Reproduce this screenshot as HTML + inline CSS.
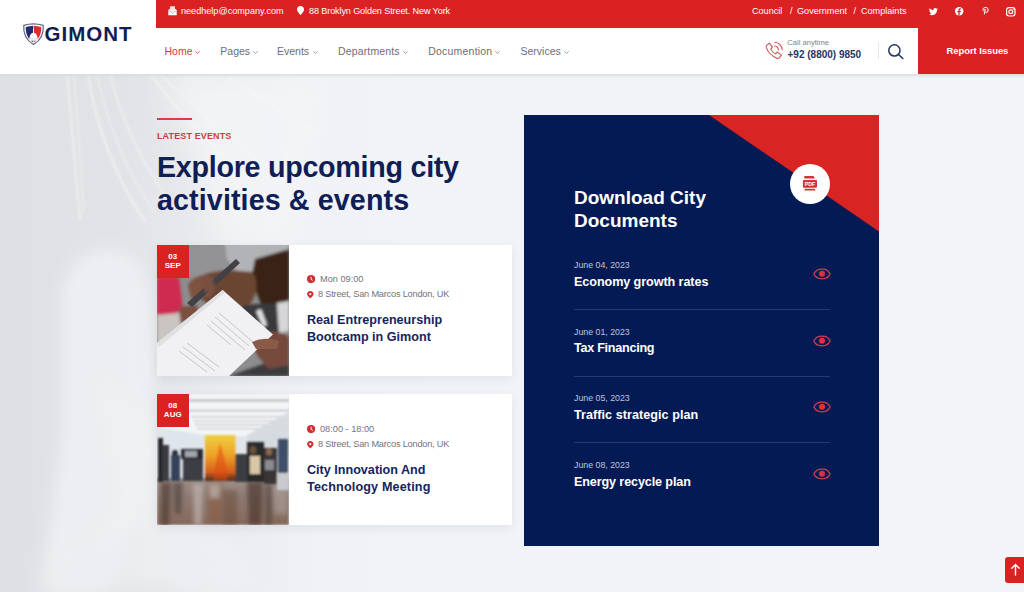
<!DOCTYPE html>
<html><head><meta charset="utf-8">
<style>
*{margin:0;padding:0;box-sizing:border-box}
html,body{width:1024px;height:592px;overflow:hidden}
body{font-family:"Liberation Sans",sans-serif;background:#f1f3f7;position:relative}
.a{position:absolute;white-space:nowrap;line-height:1}
svg{position:absolute;overflow:visible}
#header{position:absolute;left:0;top:0;width:1024px;height:74px;background:#fff}
#topbar{position:absolute;left:155.5px;top:0;width:868.5px;height:27.6px;background:#da2222}
.tb{color:#fff;font-size:9.1px;top:6.7px}
.nav{top:45.5px;font-size:10.5px;color:#6d6e72}
.nav.act{color:#d6393f}
.caret{position:absolute;width:3.2px;height:3.2px;border-right:1px solid currentColor;border-bottom:1px solid currentColor;transform:rotate(45deg)}
#report{position:absolute;left:918px;top:27px;width:106px;height:47px;background:#da2222}
.card{position:absolute;left:157px;width:355px;height:131px;background:#fff;box-shadow:0 3px 10px rgba(20,30,60,.07)}
.card .img{position:absolute;left:0;top:0;width:132px;height:131px;overflow:hidden}
.badge{position:absolute;left:0;top:0;width:31.5px;height:33px;background:#da2222}
.bt{color:#fff;font-size:8px;font-weight:bold;text-align:center;width:31.5px;left:0}
.meta{left:161px;font-size:9.2px;color:#70737b}
.ct{left:150px;font-size:12.6px;font-weight:bold;color:#15245c}
#panel{position:absolute;left:524px;top:115px;width:355px;height:431px;background:#041a54;overflow:hidden}
.pt{left:50px;font-size:19px;font-weight:bold;color:#fff}
.idate{left:50px;font-size:8.8px;color:#bfc5d6}
.ititle{left:50px;font-size:12.6px;font-weight:bold;color:#fff}
.sep{position:absolute;left:50px;width:256px;height:1px;background:#253a72}
</style></head>
<body>
<!-- background faint image -->
<svg style="left:0;top:74px" width="1024" height="518" viewBox="0 0 1024 518">
  <defs>
    <linearGradient id="bgl" x1="0" y1="0" x2="1" y2="0">
      <stop offset="0" stop-color="#dfe0e4"/>
      <stop offset="0.12" stop-color="#e1e3e6"/>
      <stop offset="0.2" stop-color="#e8eaed"/>
      <stop offset="0.3" stop-color="#eff1f5"/>
      <stop offset="0.4" stop-color="#f1f3f7"/>
      <stop offset="1" stop-color="#f2f4f8"/>
    </linearGradient>
    <linearGradient id="topsh" x1="0" y1="0" x2="0" y2="1">
      <stop offset="0" stop-color="#d8dade" stop-opacity="0.9"/>
      <stop offset="1" stop-color="#d8dade" stop-opacity="0"/>
    </linearGradient>
    <filter id="bl" x="-50%" y="-50%" width="200%" height="200%"><feGaussianBlur stdDeviation="8"/></filter>
    <filter id="bl2" x="-50%" y="-50%" width="200%" height="200%"><feGaussianBlur stdDeviation="1.1"/></filter>
    <filter id="bl3" x="-50%" y="-50%" width="200%" height="200%"><feGaussianBlur stdDeviation="14"/></filter>
  </defs>
  <rect width="1024" height="518" fill="url(#bgl)"/>
  <g filter="url(#bl3)" opacity="0.8">
    <path d="M170 0 L330 0 L300 180 L220 170 Z" fill="#f4f5f7"/>
  </g>
  <g filter="url(#bl2)" fill="none" stroke="#f8f9fa" opacity="0.6">
    <path d="M67 0 L80 145" stroke-width="1.8"/>
    <path d="M74 0 L84 140" stroke-width="1.2"/>
    <path d="M88 0 Q100 80 145 148" stroke-width="2"/>
    <path d="M97 0 Q112 75 155 140" stroke-width="1.2"/>
    <path d="M110 0 Q128 70 170 128" stroke-width="1.5"/>
    <path d="M150 0 Q180 40 240 100" stroke-width="2"/>
    <path d="M160 0 Q195 35 262 90" stroke-width="1.4"/>
    <path d="M225 0 Q260 25 320 60" stroke-width="1.6"/>
  </g>
  <g filter="url(#bl)" opacity="0.85">
    <path d="M62 230 C62 190 90 170 118 176 C140 182 150 205 152 240 L156 380 C150 440 130 480 100 518 L40 518 C50 450 62 390 62 340 Z" fill="#f0f1f4"/>
  </g>
  <g filter="url(#bl)" opacity="0.7">
    <path d="M95 300 L150 345 L205 470 L150 518 L100 470 L120 420 Z" fill="#f1f2f4"/>
    <path d="M60 470 L140 450 L130 518 L50 518 Z" fill="#eeeff2"/>
    <path d="M170 440 L240 470 L260 518 L170 518 Z" fill="#f0f1f4"/>
  </g>
  <rect width="1024" height="4" fill="url(#topsh)"/>
</svg>

<div id="header">
  <!-- logo -->
  <svg style="left:23px;top:23px" width="21" height="22" viewBox="0 0 21 22">
    <path d="M0.8 2.4 Q10.5 -0.6 20.2 2.4 C20.8 9 19.6 16.2 10.5 21.6 C1.4 16.2 0.2 9 0.8 2.4 Z" fill="#fff" stroke="#5d6284" stroke-width="1.2"/>
    <path d="M2.8 3.9 Q6.4 2.9 10.2 2.7 L10.2 19.3 C4.6 15.6 2.5 10.6 2.8 3.9 Z" fill="#222b6c"/>
    <path d="M18.2 3.9 Q14.6 2.9 10.8 2.7 L10.8 19.3 C16.4 15.6 18.5 10.6 18.2 3.9 Z" fill="#df2a2e"/>
    <path d="M6.4 15.6 Q6.6 10.4 10.5 9.6 Q14.4 10.4 14.6 15.6 Z" fill="#fff"/>
    <rect x="6.2" y="15.2" width="8.6" height="2.6" fill="#eceef2"/>
    <rect x="10.1" y="6" width="0.8" height="3.8" fill="#fff"/>
  </svg>
  <div class="a" style="left:44.5px;top:23.5px;font-size:20.5px;font-weight:bold;color:#0f1e55;letter-spacing:1px">GIMONT</div>

  <div id="topbar"></div>
  <!-- envelope -->
  <svg style="left:167.5px;top:5.7px" width="9" height="9.5" viewBox="0 0 9 9.5">
    <path d="M0.3 4 L4.5 1 L8.7 4 L8.7 9.2 L0.3 9.2 Z" fill="#fff"/>
    <rect x="2" y="0.3" width="5" height="5" fill="#fde4e4"/>
    <path d="M0.3 4.2 L4.5 7 L8.7 4.2" fill="none" stroke="#e9a0a0" stroke-width="0.8"/>
  </svg>
  <div class="a tb" style="left:181px">needhelp@company.com</div>
  <!-- pin -->
  <svg style="left:297px;top:6.3px" width="7" height="9" viewBox="0 0 7 9">
    <path d="M3.5 0 C5.6 0 7 1.5 7 3.4 C7 5.4 3.5 9 3.5 9 C3.5 9 0 5.4 0 3.4 C0 1.5 1.4 0 3.5 0 Z" fill="#fff"/>
  </svg>
  <div class="a tb" style="left:309px;letter-spacing:-0.12px">88 Broklyn Golden Street. New York</div>
  <div class="a tb" style="left:752px">Council</div>
  <div class="a tb" style="left:790px">/</div>
  <div class="a tb" style="left:797px">Government</div>
  <div class="a tb" style="left:853.5px">/</div>
  <div class="a tb" style="left:861px">Complaints</div>
  <!-- social -->
  <svg style="left:929px;top:7.5px" width="9" height="7.5" viewBox="0 0 24 20">
    <path d="M24 2.4c-.9.4-1.8.6-2.8.8 1-.6 1.8-1.6 2.2-2.7-1 .6-2 1-3.1 1.2C19.4.7 18.1 0 16.6 0c-2.7 0-4.9 2.2-4.9 4.9 0 .4 0 .8.1 1.1C7.7 5.8 4.1 3.9 1.7.9c-.4.7-.7 1.6-.7 2.5 0 1.7.9 3.2 2.2 4.1-.8 0-1.6-.2-2.2-.6v.1c0 2.4 1.7 4.4 3.9 4.8-.4.1-.8.2-1.3.2-.3 0-.6 0-.9-.1.6 2 2.4 3.4 4.6 3.4-1.7 1.3-3.8 2.1-6.1 2.1-.4 0-.8 0-1.2-.1 2.2 1.4 4.8 2.2 7.5 2.2 9.1 0 14-7.5 14-14v-.6c1-.7 1.8-1.6 2.5-2.5z" fill="#fff"/>
  </svg>
  <svg style="left:955.2px;top:6.8px" width="8.4" height="8.4" viewBox="0 0 24 24">
    <circle cx="12" cy="12" r="12" fill="#fff"/>
    <path d="M13.4 24 V14.8 H16.4 L16.9 11.2 H13.4 V9 C13.4 8 13.7 7.3 15.1 7.3 H17 V4.1 C16.6 4 15.5 3.9 14.3 3.9 C11.6 3.9 9.8 5.5 9.8 8.5 V11.2 H6.8 V14.8 H9.8 V24 Z" fill="#da2222"/>
  </svg>
  <svg style="left:981.7px;top:7.2px" width="7" height="7.8" viewBox="0 0 18 20">
    <path d="M9.6 0C4.1 0 1.3 3.9 1.3 7.2c0 2 .8 3.7 2.4 4.4.3.1.5 0 .6-.3l.2-.9c.1-.3 0-.4-.2-.7-.5-.6-.8-1.3-.8-2.3 0-3 2.2-5.6 5.8-5.6 3.2 0 4.9 1.9 4.9 4.5 0 3.4-1.5 6.3-3.7 6.3-1.2 0-2.2-1-1.9-2.3.4-1.5 1.1-3.1 1.1-4.2 0-1-.5-1.8-1.6-1.8-1.3 0-2.3 1.3-2.3 3.1 0 1.1.4 1.9.4 1.9L5.1 16c-.4 1.8-.1 4 0 4.2 0 .1.2.2.3.1.1-.1 1.6-1.9 2-3.7l.8-3c.4.7 1.5 1.4 2.7 1.4 3.6 0 6-3.3 6-7.6C16.9 3.1 14 0 9.6 0z" fill="#fff"/>
  </svg>
  <svg style="left:1006.3px;top:6.6px" width="9.6" height="9.6" viewBox="0 0 24 24">
    <rect x="1.5" y="1.5" width="21" height="21" rx="6" fill="none" stroke="#fff" stroke-width="3"/>
    <circle cx="12" cy="12" r="4.8" fill="none" stroke="#fff" stroke-width="3"/>
    <circle cx="18.3" cy="5.7" r="1.4" fill="#fff"/>
  </svg>

  <!-- nav -->
  <div class="a nav act" style="left:164.5px">Home</div><svg style="left:195.2px;top:50.5px" width="5" height="3" viewBox="0 0 5 3"><path d="M0.4 0.4 L2.5 2.4 L4.6 0.4" fill="none" stroke="#d6393f" stroke-width="0.85"/></svg>
  <div class="a nav" style="left:220.3px">Pages</div><svg style="left:252.7px;top:50.5px" width="5" height="3" viewBox="0 0 5 3"><path d="M0.4 0.4 L2.5 2.4 L4.6 0.4" fill="none" stroke="#8a8b8f" stroke-width="0.85"/></svg>
  <div class="a nav" style="left:277px">Events</div><svg style="left:312.7px;top:50.5px" width="5" height="3" viewBox="0 0 5 3"><path d="M0.4 0.4 L2.5 2.4 L4.6 0.4" fill="none" stroke="#8a8b8f" stroke-width="0.85"/></svg>
  <div class="a nav" style="left:338px;letter-spacing:0.15px">Departments</div><svg style="left:403.2px;top:50.5px" width="5" height="3" viewBox="0 0 5 3"><path d="M0.4 0.4 L2.5 2.4 L4.6 0.4" fill="none" stroke="#8a8b8f" stroke-width="0.85"/></svg>
  <div class="a nav" style="left:428.3px;letter-spacing:0.2px">Documention</div><svg style="left:495.2px;top:50.5px" width="5" height="3" viewBox="0 0 5 3"><path d="M0.4 0.4 L2.5 2.4 L4.6 0.4" fill="none" stroke="#8a8b8f" stroke-width="0.85"/></svg>
  <div class="a nav" style="left:520.5px">Services</div><svg style="left:564.2px;top:50.5px" width="5" height="3" viewBox="0 0 5 3"><path d="M0.4 0.4 L2.5 2.4 L4.6 0.4" fill="none" stroke="#8a8b8f" stroke-width="0.85"/></svg>

  <!-- phone -->
  <svg style="left:763.5px;top:40.5px" width="19.5" height="19.5" viewBox="0 0 24 24">
    <path d="M3.6 5.2 L6.6 2.6 L10.4 7.6 L8.3 10 C9.6 12.6 11.6 14.6 14.2 15.8 L16.4 13.6 L21.4 17.4 L18.9 20.4 C18.1 21.3 16.9 21.6 15.8 21.1 C9 18.4 5.4 14.8 2.8 8.2 C2.4 7.1 2.8 5.9 3.6 5.2 Z" fill="none" stroke="#d9474c" stroke-width="1.3" stroke-linejoin="round"/>
    <path d="M13 6.2 A5.4 5.4 0 0 1 17.8 11" fill="none" stroke="#d9474c" stroke-width="1.3" stroke-linecap="round"/>
    <path d="M13.2 1.6 A9.6 9.6 0 0 1 22.4 10.8" fill="none" stroke="#d9474c" stroke-width="1.3" stroke-linecap="round"/>
  </svg>
  <div class="a" style="left:787.3px;top:38.5px;font-size:7.6px;color:#7d7f84">Call anytime</div>
  <div class="a" style="left:787.5px;top:50.2px;font-size:10px;font-weight:bold;color:#243463">+92 (8800) 9850</div>
  <div style="position:absolute;left:878px;top:41.7px;width:1px;height:17px;background:#e6e7ea"></div>
  <svg style="left:887.5px;top:44px" width="15.5" height="15" viewBox="0 0 15.5 15">
    <circle cx="6.4" cy="6.4" r="5.6" fill="none" stroke="#243463" stroke-width="1.5"/>
    <path d="M10.5 10.5 L14.8 14.5" stroke="#243463" stroke-width="1.6" stroke-linecap="round"/>
  </svg>

  <div id="report"></div>
  <div class="a" style="left:946.5px;top:46.2px;font-size:9.5px;font-weight:bold;color:#fff;letter-spacing:-0.08px">Report Issues</div>
</div>

<!-- section heading -->
<div style="position:absolute;left:157px;top:118px;width:35px;height:2px;background:#d84040"></div>
<div class="a" style="left:157px;top:131.6px;font-size:9px;font-weight:bold;color:#d03c42;letter-spacing:0.12px">LATEST EVENTS</div>
<div class="a" style="left:157px;top:152.9px;font-size:28.7px;font-weight:bold;color:#0f1e55;letter-spacing:-0.28px">Explore upcoming city</div>
<div class="a" style="left:157px;top:186.3px;font-size:28.7px;font-weight:bold;color:#0f1e55;letter-spacing:0.1px">activities &amp; events</div>

<!-- card 1 -->
<div class="card" style="top:245px">
  <div class="img">
    <svg style="left:0;top:0" width="132" height="131" viewBox="0 0 132 131">
      <defs><filter id="f1" x="-20%" y="-20%" width="140%" height="140%"><feGaussianBlur stdDeviation="1.6"/></filter>
      <filter id="f1b"><feGaussianBlur stdDeviation="0.5"/></filter></defs>
      <rect width="132" height="131" fill="#8d8d8f"/>
      <g filter="url(#f1)">
        <rect x="20" y="0" width="60" height="30" fill="#939395"/>
        <path d="M68 -2 L132 -2 L132 8 L112 26 L80 26 L70 14 Z" fill="#b2b3b6"/>
        <path d="M0 32 L22 32 L26 64 L14 72 L0 72 Z" fill="#cf2c50"/>
        <path d="M0 70 L22 68 L26 98 L0 100 Z" fill="#c9c5c0"/>
        <path d="M98 14 L132 4 L132 62 L106 64 L94 34 Z" fill="#3b2419"/>
        <path d="M84 60 L120 58 L122 88 L88 88 Z" fill="#38393d"/>
        <path d="M120 58 L132 56 L132 86 L122 88 Z" fill="#d6d6d8"/>
        <path d="M99 66 L104 64 L110 80 L106 82 Z" fill="#e4e4e6"/>
        <path d="M36 36 C46 26 72 22 96 28 C102 36 100 52 92 60 L62 64 C50 60 42 52 36 46 Z" fill="#6a4433"/>
        <path d="M31 40 C36 30 50 28 57 34 L54 52 L34 54 Z" fill="#7d5240"/>
        <path d="M22 62 L40 60 L42 76 L24 78 Z" fill="#7a5040"/>
        <path d="M72 131 L132 110 L132 131 Z" fill="#3a3a3c"/>
        <path d="M94 90 C110 84 126 86 132 92 L132 120 L112 124 C104 116 98 108 95 100 Z" fill="#74493a"/>
      </g>
      <path d="M30 58 L79 14 L83 18 L35 62 Z" fill="#404045" filter="url(#f1b)"/>
      <path d="M44 34 C52 30 60 36 57 46 L48 48 Z" fill="#7a5040" filter="url(#f1)"/>
      <path d="M0 98 L65.7 45 L116 89.5 L72 131 L0 131 Z" fill="#f1f1f3" filter="url(#f1b)"/>
      <path d="M0 98 L65.7 45 L68 47.5 L2 102 Z" fill="#e0e0e3" filter="url(#f1b)"/>
      <g stroke="#9d9da3" stroke-width="0.7" opacity="0.75">
        <path d="M62 68 L96 97"/><path d="M58 72 L92 101"/><path d="M54 76 L88 105"/><path d="M50 80 L74 100"/>
        <path d="M30 98 L62 122"/><path d="M26 102 L58 126"/><path d="M22 106 L50 127"/>
      </g>
      <path d="M95 97 C104 93 114 93 122 96 L120 104 L99 104 Z" fill="#8a5a48" filter="url(#f1b)"/>
    </svg>
  </div>
  <div class="badge"></div>
  <div class="a bt" style="top:7.7px">03</div>
  <div class="a bt" style="top:16.9px">SEP</div>
  <svg style="left:150.2px;top:30.2px" width="8.2" height="8.2" viewBox="0 0 10 10">
    <circle cx="5" cy="5" r="5" fill="#cf3036"/>
    <path d="M5 2.2 V5.2 L7 6.6" fill="none" stroke="#fff" stroke-width="1.2"/>
  </svg>
  <div class="a meta" style="left:163px;top:29.8px">Mon 09:00</div>
  <svg style="left:150.2px;top:45.8px" width="6.6" height="7.4" viewBox="0 0 7 8">
    <path d="M3.5 0 C5.5 0 7 1.5 7 3.3 C7 5.2 3.5 8 3.5 8 C3.5 8 0 5.2 0 3.3 C0 1.5 1.5 0 3.5 0 Z" fill="#cf3036"/>
    <circle cx="3.5" cy="3.3" r="1.2" fill="#fff"/>
  </svg>
  <div class="a meta" style="left:161px;top:44.8px;letter-spacing:-0.2px">8 Street, San Marcos London, UK</div>
  <div class="a ct" style="top:68.8px">Real Entrepreneurship</div>
  <div class="a ct" style="top:86px">Bootcamp in Gimont</div>
</div>

<!-- card 2 -->
<div class="card" style="top:394.3px">
  <div class="img">
    <svg style="left:0;top:0" width="132" height="131" viewBox="0 0 132 131">
      <defs>
        <filter id="f2" x="-10%" y="-10%" width="120%" height="120%"><feGaussianBlur stdDeviation="0.8"/></filter>
        <filter id="f2b" x="-20%" y="-20%" width="140%" height="140%"><feGaussianBlur stdDeviation="2.2"/></filter>
        <linearGradient id="floor" x1="0" y1="0" x2="0" y2="1">
          <stop offset="0" stop-color="#a0928c"/><stop offset="0.4" stop-color="#8e7a72"/><stop offset="1" stop-color="#86695c"/>
        </linearGradient>
        <linearGradient id="art" x1="0" y1="0" x2="0" y2="1">
          <stop offset="0" stop-color="#f0d040"/><stop offset="0.45" stop-color="#eea028"/><stop offset="0.8" stop-color="#d8601a"/><stop offset="1" stop-color="#4a2a20"/>
        </linearGradient>
      </defs>
      <rect width="132" height="131" fill="#e2e6ea"/>
      <g filter="url(#f2)">
        <rect x="0" y="0" width="132" height="42" fill="#f4f5f7"/>
        <g fill="#c6cace"><rect x="32" y="5" width="100" height="3"/><rect x="32" y="15.5" width="100" height="2"/><rect x="34" y="22" width="92" height="1.4"/><rect x="36" y="26.4" width="84" height="1.3"/><rect x="38" y="30" width="74" height="1.4"/><rect x="40" y="34" width="64" height="1.3"/></g>
        <path d="M0 33 L48 41 L48 66 L0 66 Z" fill="#dfe5ec"/>
        <path d="M132 18 L90 41 L90 60 L132 60 Z" fill="#d6dbe0"/>
        <rect x="0" y="84" width="132" height="47" fill="url(#floor)"/>
      </g>
      <g filter="url(#f2b)">
        <path d="M4 88 L14 88 L12 131 L4 131 Z" fill="#4e3a32" opacity="0.7"/>
        <path d="M16 88 L26 88 L24 120 L18 120 Z" fill="#4a3a36" opacity="0.6"/>
        <path d="M50 88 L66 88 L64 128 L52 128 Z" fill="#8a5a3a" opacity="0.55"/>
        <path d="M52 90 L63 90 L62 104 L53 104 Z" fill="#b8aca8" opacity="0.8"/>
        <path d="M36 90 L46 90 L45 131 L37 131 Z" fill="#c4bcb8" opacity="0.6"/>
        <path d="M66 96 L80 96 L80 131 L66 131 Z" fill="#6a4a3a" opacity="0.5"/>
        <path d="M116 92 L130 92 L130 120 L118 120 Z" fill="#b0a8a4" opacity="0.5"/>
        <path d="M90 88 L106 88 L104 131 L92 131 Z" fill="#4c3830" opacity="0.7"/>
        <path d="M108 90 L116 90 L115 131 L108 131 Z" fill="#50403a" opacity="0.6"/>
      </g>
      <g filter="url(#f2)">
        <rect x="1" y="44" width="5" height="44" fill="#25262c"/>
        <rect x="5" y="51" width="7" height="36" fill="#3a3a40"/>
        <ellipse cx="18" cy="59" rx="3" ry="3" fill="#2e2e34"/>
        <rect x="14" y="61" width="9" height="26" fill="#34405a"/>
        <rect x="24" y="55" width="22" height="10" fill="#2a2a30"/>
        <rect x="28" y="57" width="12" height="6" fill="#a0a6ae"/>
        <rect x="26" y="65" width="20" height="22" fill="#3c3c44"/>
        <rect x="121" y="45" width="10" height="35" fill="#3e5068"/>
        <rect x="120" y="79" width="12" height="17" fill="#cacace"/>
        <rect x="90" y="48" width="17" height="40" fill="#2c2a2a"/>
        <ellipse cx="96" cy="56" rx="3.5" ry="4" fill="#6a5040"/>
        <rect x="93" y="62" width="10" height="18" fill="#d8c8a8"/>
        <rect x="107" y="54" width="13" height="36" fill="#3a3634"/>
        <ellipse cx="112" cy="58" rx="3" ry="3.5" fill="#8a6a50"/>
        <rect x="108" y="66" width="9" height="10" fill="#8a8a90"/>
        <rect x="78" y="60" width="12" height="28" fill="#3a3c42"/>
        <rect x="48" y="41" width="30.5" height="46" fill="url(#art)"/>
        <path d="M58 72 C60 62 62 54 63 48 C65 56 68 64 70 76 L70 86 L56 86 Z" fill="#e24a14" opacity="0.55"/>
      </g>
    </svg>
  </div>
  <div class="badge"></div>
  <div class="a bt" style="top:7.7px">08</div>
  <div class="a bt" style="top:16.9px">AUG</div>
  <svg style="left:150.2px;top:30.9px" width="8.2" height="8.2" viewBox="0 0 10 10">
    <circle cx="5" cy="5" r="5" fill="#cf3036"/>
    <path d="M5 2.2 V5.2 L7 6.6" fill="none" stroke="#fff" stroke-width="1.2"/>
  </svg>
  <div class="a meta" style="left:163px;top:30.5px">08:00 - 18:00</div>
  <svg style="left:150.2px;top:46.5px" width="6.6" height="7.4" viewBox="0 0 7 8">
    <path d="M3.5 0 C5.5 0 7 1.5 7 3.3 C7 5.2 3.5 8 3.5 8 C3.5 8 0 5.2 0 3.3 C0 1.5 1.5 0 3.5 0 Z" fill="#cf3036"/>
    <circle cx="3.5" cy="3.3" r="1.2" fill="#fff"/>
  </svg>
  <div class="a meta" style="left:161px;top:45.5px;letter-spacing:-0.2px">8 Street, San Marcos London, UK</div>
  <div class="a ct" style="top:69.5px">City Innovation And</div>
  <div class="a ct" style="top:86.7px;letter-spacing:0.15px">Technology Meeting</div>
</div>

<!-- panel -->
<div id="panel">
  <svg style="left:0;top:0" width="355" height="431" viewBox="0 0 355 431">
    <path d="M185 0 L355 0 L355 116.5 Z" fill="#d92424"/>
    <circle cx="286" cy="69" r="20" fill="#fff"/>
    <path d="M280.4 60.9 L289.5 60.9 L291 63.6 L280.4 63.6 Z" fill="#d63236"/>
    <rect x="278.9" y="64.9" width="14.1" height="7.9" rx="1" fill="#d63236"/>
    <rect x="280.4" y="73.8" width="10.9" height="1.8" rx="0.6" fill="#d63236"/>
    <text x="285.95" y="71.1" font-family="Liberation Sans" font-weight="bold" font-size="5.2" fill="#fff" text-anchor="middle">PDF</text>
  </svg>
  <div class="a pt" style="top:73.2px">Download City</div>
  <div class="a pt" style="top:95.6px">Documents</div>

  <div class="a idate" style="top:146.1px">June 04, 2023</div>
  <div class="a ititle" style="top:160.8px;letter-spacing:-0.07px">Economy growth rates</div>
  <div class="sep" style="top:194px"></div>

  <div class="a idate" style="top:212.7px">June 01, 2023</div>
  <div class="a ititle" style="top:227.4px;letter-spacing:-0.27px">Tax Financing</div>
  <div class="sep" style="top:260.7px"></div>

  <div class="a idate" style="top:279.3px">June 05, 2023</div>
  <div class="a ititle" style="top:294px;letter-spacing:0.05px">Traffic strategic plan</div>
  <div class="sep" style="top:327.4px"></div>

  <div class="a idate" style="top:345.9px">June 08, 2023</div>
  <div class="a ititle" style="top:360.6px;letter-spacing:-0.12px">Energy recycle plan</div>

  <svg style="left:288.5px;top:153px" width="18" height="12" viewBox="0 0 18 12">
    <path d="M0.9 6 C3.8 -0.4 14.2 -0.4 17.1 6 C14.2 12.4 3.8 12.4 0.9 6 Z" fill="none" stroke="#d2404e" stroke-width="1.3" stroke-linejoin="round"/>
    <circle cx="9" cy="5.8" r="3" fill="#e2303a"/>
  </svg>
  <svg style="left:288.5px;top:219.7px" width="18" height="12" viewBox="0 0 18 12">
    <path d="M0.9 6 C3.8 -0.4 14.2 -0.4 17.1 6 C14.2 12.4 3.8 12.4 0.9 6 Z" fill="none" stroke="#d2404e" stroke-width="1.3" stroke-linejoin="round"/>
    <circle cx="9" cy="5.8" r="3" fill="#e2303a"/>
  </svg>
  <svg style="left:288.5px;top:286.4px" width="18" height="12" viewBox="0 0 18 12">
    <path d="M0.9 6 C3.8 -0.4 14.2 -0.4 17.1 6 C14.2 12.4 3.8 12.4 0.9 6 Z" fill="none" stroke="#d2404e" stroke-width="1.3" stroke-linejoin="round"/>
    <circle cx="9" cy="5.8" r="3" fill="#e2303a"/>
  </svg>
  <svg style="left:288.5px;top:353.1px" width="18" height="12" viewBox="0 0 18 12">
    <path d="M0.9 6 C3.8 -0.4 14.2 -0.4 17.1 6 C14.2 12.4 3.8 12.4 0.9 6 Z" fill="none" stroke="#d2404e" stroke-width="1.3" stroke-linejoin="round"/>
    <circle cx="9" cy="5.8" r="3" fill="#e2303a"/>
  </svg>
</div>

<!-- scroll top -->
<div style="position:absolute;left:1005px;top:556.7px;width:24px;height:26px;background:#da2222;border-radius:3px"></div>
<svg style="left:1010px;top:563px" width="11" height="13" viewBox="0 0 11 13">
  <path d="M5.5 12 V1.5 M1.8 5.2 L5.5 1.5 L9.2 5.2" fill="none" stroke="#fff" stroke-width="1.4" stroke-linecap="round"/>
</svg>
</body></html>
